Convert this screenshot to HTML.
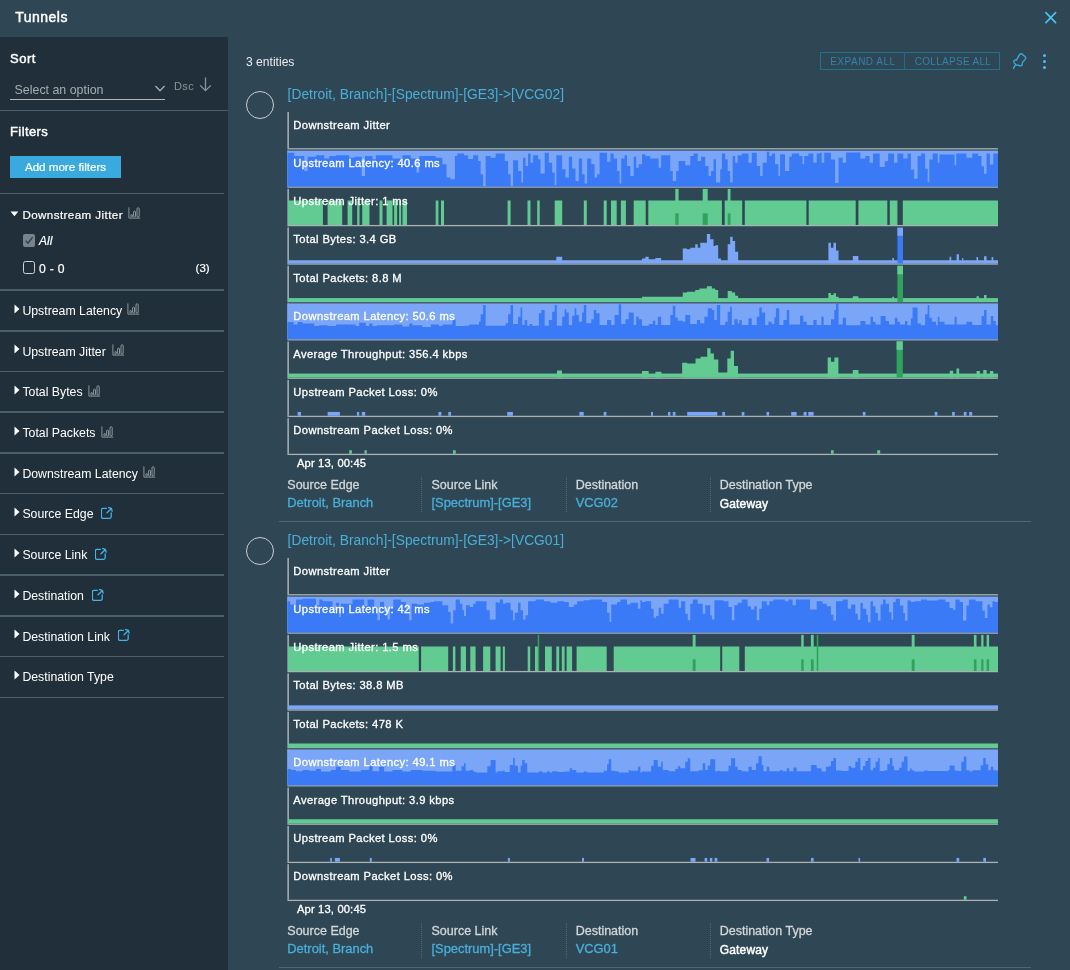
<!DOCTYPE html>
<html><head><meta charset="utf-8"><title>Tunnels</title>
<style>
html,body{margin:0;padding:0;}
body{width:1070px;height:970px;overflow:hidden;position:relative;background:#2f4654;font-family:"Liberation Sans", sans-serif;}
.t{position:absolute;line-height:1;white-space:nowrap;}
#wrap{position:absolute;left:0;top:0;width:1070px;height:970px;will-change:transform;}
.r{position:absolute;}
</style></head><body><div id="wrap">
<div class="r" style="left:0.00px;top:0.00px;width:1070.00px;height:37.00px;background:#2f4654;"></div>
<div class="t" style="left:15.20px;top:9.95px;font-size:14px;color:#fff;-webkit-text-stroke:0.45px #fff;letter-spacing:0.5px;">Tunnels</div>
<svg class="r" style="left:1043px;top:10px" width="16" height="16" viewBox="0 0 16 16"><path d="M2.9 2.6 L12.6 12.6 M12.6 2.6 L2.9 12.6" stroke="#49c2f2" stroke-width="1.7" stroke-linecap="round" fill="none"/></svg>
<div class="r" style="left:0.00px;top:37.00px;width:228.00px;height:933.00px;background:#202f39;"></div>
<div class="t" style="left:10.00px;top:52.00px;font-size:13px;color:#fff;-webkit-text-stroke:0.45px #fff;letter-spacing:0.5px;">Sort</div>
<div class="t" style="left:14.60px;top:84.10px;font-size:12.4px;color:#a7adb0;">Select an option</div>
<div class="r" style="left:10.00px;top:98.60px;width:154.60px;height:1.40px;background:#b4b8b8;"></div>
<svg class="r" style="left:154px;top:84px" width="12" height="9" viewBox="0 0 12 9"><path d="M1.5 2 L6 6.8 L10.5 2" stroke="#a9aaa5" stroke-width="1.4" fill="none"/></svg>
<div class="t" style="left:174.10px;top:81.49px;font-size:11px;color:#8a9599;letter-spacing:0.3px;">Dsc</div>
<svg class="r" style="left:199px;top:77px" width="13" height="15" viewBox="0 0 13 15"><path d="M6.5 0.6 L6.5 13.6 M1.2 8.4 L6.5 13.6 L11.8 8.4" stroke="#8a9599" stroke-width="1.3" fill="none"/></svg>
<div class="r" style="left:0.00px;top:109.60px;width:228.00px;height:1.60px;background:#4b5f6c;"></div>
<div class="t" style="left:10.00px;top:125.20px;font-size:13px;color:#fff;-webkit-text-stroke:0.45px #fff;letter-spacing:0.4px;">Filters</div>
<div class="r" style="left:10.00px;top:156.40px;width:111.00px;height:21.30px;background:#3aaade;"></div>
<div class="t" style="left:10.00px;top:161.48px;font-size:11.6px;color:#fff;-webkit-text-stroke:0.2px #fff;width:111px;text-align:center;">Add more filters</div>
<div class="r" style="left:0.00px;top:192.60px;width:224.00px;height:1.60px;background:#4b5f6c;"></div>
<svg class="r" style="left:10px;top:211px" width="9" height="6" viewBox="0 0 9 6"><path d="M0.5 0.5 H8.3 L4.4 5.3 Z" fill="#fff"/></svg>
<div class="t" style="left:22.40px;top:208.78px;font-size:11.6px;color:#fff;-webkit-text-stroke:0.2px #fff;letter-spacing:0.42px;">Downstream Jitter</div>
<svg class="r" style="left:128.0px;top:206.5px" width="13" height="12" viewBox="0 0 13 12"><g stroke="#98a2a7" stroke-width="0.9" fill="none"><path d="M0.9 0.4 V11.1 H12.2"/><rect x="2.9" y="7.6" width="1.4" height="2.4" rx="0.5"/><rect x="5.6" y="4.2" width="1.9" height="5.8" rx="0.8"/><rect x="9" y="0.8" width="2.2" height="9.2" rx="1"/></g></svg>
<div class="r" style="left:23.00px;top:234.00px;width:12.00px;height:12.50px;background:#77848b;border-radius:2px;"></div>
<svg class="r" style="left:23px;top:234px" width="12" height="13" viewBox="0 0 12 13"><path d="M2.6 6.6 L5 9.2 L9.6 3.2" stroke="#2d3a42" stroke-width="1.3" fill="none"/></svg>
<div class="t" style="left:39.00px;top:235.04px;font-size:12px;color:#fff;-webkit-text-stroke:0.2px #fff;font-style:italic;">All</div>
<div class="r" style="left:23.00px;top:261.40px;width:12.00px;height:12.60px;background:transparent;border:1.4px solid #cfd3d4;box-sizing:border-box;border-radius:2.5px;"></div>
<div class="t" style="left:39.00px;top:262.87px;font-size:12.2px;color:#fff;-webkit-text-stroke:0.2px #fff;letter-spacing:0.3px;">0 - 0</div>
<div class="t" style="left:195.60px;top:263.47px;font-size:11.5px;color:#fff;-webkit-text-stroke:0.2px #fff;">(3)</div>
<div class="r" style="left:0.00px;top:289.20px;width:224.00px;height:1.60px;background:#4b5f6c;"></div>
<svg class="r" style="left:14.2px;top:303.6px" width="6" height="10" viewBox="0 0 6 10"><path d="M0.5 0.4 V9.4 L5.5 4.9 Z" fill="#fff"/></svg>
<div class="t" style="left:22.40px;top:304.79px;font-size:12.3px;color:#fff;">Upstream Latency</div>
<svg class="r" style="left:127.0px;top:303.4px" width="13" height="12" viewBox="0 0 13 12"><g stroke="#98a2a7" stroke-width="0.9" fill="none"><path d="M0.9 0.4 V11.1 H12.2"/><rect x="2.9" y="7.6" width="1.4" height="2.4" rx="0.5"/><rect x="5.6" y="4.2" width="1.9" height="5.8" rx="0.8"/><rect x="9" y="0.8" width="2.2" height="9.2" rx="1"/></g></svg>
<div class="r" style="left:0.00px;top:329.93px;width:224.00px;height:1.60px;background:#4b5f6c;"></div>
<svg class="r" style="left:14.2px;top:344.3px" width="6" height="10" viewBox="0 0 6 10"><path d="M0.5 0.4 V9.4 L5.5 4.9 Z" fill="#fff"/></svg>
<div class="t" style="left:22.40px;top:345.52px;font-size:12.3px;color:#fff;">Upstream Jitter</div>
<svg class="r" style="left:112.0px;top:344.1px" width="13" height="12" viewBox="0 0 13 12"><g stroke="#98a2a7" stroke-width="0.9" fill="none"><path d="M0.9 0.4 V11.1 H12.2"/><rect x="2.9" y="7.6" width="1.4" height="2.4" rx="0.5"/><rect x="5.6" y="4.2" width="1.9" height="5.8" rx="0.8"/><rect x="9" y="0.8" width="2.2" height="9.2" rx="1"/></g></svg>
<div class="r" style="left:0.00px;top:370.66px;width:224.00px;height:1.60px;background:#4b5f6c;"></div>
<svg class="r" style="left:14.2px;top:385.1px" width="6" height="10" viewBox="0 0 6 10"><path d="M0.5 0.4 V9.4 L5.5 4.9 Z" fill="#fff"/></svg>
<div class="t" style="left:22.40px;top:386.25px;font-size:12.3px;color:#fff;">Total Bytes</div>
<svg class="r" style="left:87.5px;top:384.9px" width="13" height="12" viewBox="0 0 13 12"><g stroke="#98a2a7" stroke-width="0.9" fill="none"><path d="M0.9 0.4 V11.1 H12.2"/><rect x="2.9" y="7.6" width="1.4" height="2.4" rx="0.5"/><rect x="5.6" y="4.2" width="1.9" height="5.8" rx="0.8"/><rect x="9" y="0.8" width="2.2" height="9.2" rx="1"/></g></svg>
<div class="r" style="left:0.00px;top:411.39px;width:224.00px;height:1.60px;background:#4b5f6c;"></div>
<svg class="r" style="left:14.2px;top:425.8px" width="6" height="10" viewBox="0 0 6 10"><path d="M0.5 0.4 V9.4 L5.5 4.9 Z" fill="#fff"/></svg>
<div class="t" style="left:22.40px;top:426.98px;font-size:12.3px;color:#fff;">Total Packets</div>
<svg class="r" style="left:100.5px;top:425.6px" width="13" height="12" viewBox="0 0 13 12"><g stroke="#98a2a7" stroke-width="0.9" fill="none"><path d="M0.9 0.4 V11.1 H12.2"/><rect x="2.9" y="7.6" width="1.4" height="2.4" rx="0.5"/><rect x="5.6" y="4.2" width="1.9" height="5.8" rx="0.8"/><rect x="9" y="0.8" width="2.2" height="9.2" rx="1"/></g></svg>
<div class="r" style="left:0.00px;top:452.12px;width:224.00px;height:1.60px;background:#4b5f6c;"></div>
<svg class="r" style="left:14.2px;top:466.5px" width="6" height="10" viewBox="0 0 6 10"><path d="M0.5 0.4 V9.4 L5.5 4.9 Z" fill="#fff"/></svg>
<div class="t" style="left:22.40px;top:467.71px;font-size:12.3px;color:#fff;">Downstream Latency</div>
<svg class="r" style="left:143.0px;top:466.3px" width="13" height="12" viewBox="0 0 13 12"><g stroke="#98a2a7" stroke-width="0.9" fill="none"><path d="M0.9 0.4 V11.1 H12.2"/><rect x="2.9" y="7.6" width="1.4" height="2.4" rx="0.5"/><rect x="5.6" y="4.2" width="1.9" height="5.8" rx="0.8"/><rect x="9" y="0.8" width="2.2" height="9.2" rx="1"/></g></svg>
<div class="r" style="left:0.00px;top:492.85px;width:224.00px;height:1.60px;background:#4b5f6c;"></div>
<svg class="r" style="left:14.2px;top:507.2px" width="6" height="10" viewBox="0 0 6 10"><path d="M0.5 0.4 V9.4 L5.5 4.9 Z" fill="#fff"/></svg>
<div class="t" style="left:22.40px;top:508.44px;font-size:12.3px;color:#fff;">Source Edge</div>
<svg class="r" style="left:100.5px;top:507.0px" width="13" height="13" viewBox="0 0 13 13"><path d="M5.4 1.3 H1.9 Q0.4 1.3 0.4 2.8 V9.8 Q0.4 11.3 1.9 11.3 H8.7 Q10.2 11.3 10.2 9.8 V6 M6 5.7 L10.5 1.5 M7.5 0.7 Q10.7 0.5 11.1 4.1" stroke="#45b4e4" stroke-width="1.3" fill="none" stroke-linecap="round"/></svg>
<div class="r" style="left:0.00px;top:533.58px;width:224.00px;height:1.60px;background:#4b5f6c;"></div>
<svg class="r" style="left:14.2px;top:548.0px" width="6" height="10" viewBox="0 0 6 10"><path d="M0.5 0.4 V9.4 L5.5 4.9 Z" fill="#fff"/></svg>
<div class="t" style="left:22.40px;top:549.17px;font-size:12.3px;color:#fff;">Source Link</div>
<svg class="r" style="left:94.7px;top:547.8px" width="13" height="13" viewBox="0 0 13 13"><path d="M5.4 1.3 H1.9 Q0.4 1.3 0.4 2.8 V9.8 Q0.4 11.3 1.9 11.3 H8.7 Q10.2 11.3 10.2 9.8 V6 M6 5.7 L10.5 1.5 M7.5 0.7 Q10.7 0.5 11.1 4.1" stroke="#45b4e4" stroke-width="1.3" fill="none" stroke-linecap="round"/></svg>
<div class="r" style="left:0.00px;top:574.31px;width:224.00px;height:1.60px;background:#4b5f6c;"></div>
<svg class="r" style="left:14.2px;top:588.7px" width="6" height="10" viewBox="0 0 6 10"><path d="M0.5 0.4 V9.4 L5.5 4.9 Z" fill="#fff"/></svg>
<div class="t" style="left:22.40px;top:589.90px;font-size:12.3px;color:#fff;">Destination</div>
<svg class="r" style="left:92.1px;top:588.5px" width="13" height="13" viewBox="0 0 13 13"><path d="M5.4 1.3 H1.9 Q0.4 1.3 0.4 2.8 V9.8 Q0.4 11.3 1.9 11.3 H8.7 Q10.2 11.3 10.2 9.8 V6 M6 5.7 L10.5 1.5 M7.5 0.7 Q10.7 0.5 11.1 4.1" stroke="#45b4e4" stroke-width="1.3" fill="none" stroke-linecap="round"/></svg>
<div class="r" style="left:0.00px;top:615.04px;width:224.00px;height:1.60px;background:#4b5f6c;"></div>
<svg class="r" style="left:14.2px;top:629.4px" width="6" height="10" viewBox="0 0 6 10"><path d="M0.5 0.4 V9.4 L5.5 4.9 Z" fill="#fff"/></svg>
<div class="t" style="left:22.40px;top:630.63px;font-size:12.3px;color:#fff;">Destination Link</div>
<svg class="r" style="left:118.3px;top:629.2px" width="13" height="13" viewBox="0 0 13 13"><path d="M5.4 1.3 H1.9 Q0.4 1.3 0.4 2.8 V9.8 Q0.4 11.3 1.9 11.3 H8.7 Q10.2 11.3 10.2 9.8 V6 M6 5.7 L10.5 1.5 M7.5 0.7 Q10.7 0.5 11.1 4.1" stroke="#45b4e4" stroke-width="1.3" fill="none" stroke-linecap="round"/></svg>
<div class="r" style="left:0.00px;top:655.77px;width:224.00px;height:1.60px;background:#4b5f6c;"></div>
<svg class="r" style="left:14.2px;top:670.2px" width="6" height="10" viewBox="0 0 6 10"><path d="M0.5 0.4 V9.4 L5.5 4.9 Z" fill="#fff"/></svg>
<div class="t" style="left:22.40px;top:671.36px;font-size:12.3px;color:#fff;">Destination Type</div>
<div class="r" style="left:0.00px;top:696.50px;width:224.00px;height:1.60px;background:#4b5f6c;"></div>
<div class="t" style="left:246.00px;top:55.76px;font-size:12.1px;color:#e8ecee;">3 entities</div>
<div class="r" style="left:819.7px;top:52.2px;width:180.6px;height:18.3px;border:1.3px solid #23708f;box-sizing:border-box;"></div>
<div class="r" style="left:904.30px;top:52.20px;width:1.00px;height:18.30px;background:#1f6d8c;"></div>
<div class="t" style="left:830.20px;top:56.73px;font-size:10px;color:#2f85ab;letter-spacing:0.5px;">EXPAND ALL</div>
<div class="t" style="left:914.70px;top:56.73px;font-size:10px;color:#2f85ab;letter-spacing:0.3px;">COLLAPSE ALL</div>
<svg class="r" style="left:1005px;top:48px" width="26" height="24" viewBox="1005 48 26 24"><path d="M1019.6 54.6 Q1020.6 53.2 1021.8 53.9 L1025.2 56.8 Q1026.2 57.8 1025.4 58.9 L1022.2 62.9 Q1022.9 64.6 1021.4 65.6 Q1019.8 66.2 1018.6 65.2 L1016.2 65 L1014 62.6 Q1013.4 61.2 1014.2 60.4 Q1015.3 59.8 1016.4 60.2 Z M1015.6 64.6 L1013.4 68.4" stroke="#3aa6d6" stroke-width="1.4" fill="none" stroke-linejoin="round" stroke-linecap="round"/></svg>
<div class="r" style="left:1043.05px;top:53.85px;width:3.30px;height:3.30px;background:#49c0ef;border-radius:50%;"></div>
<div class="r" style="left:1043.05px;top:59.90px;width:3.30px;height:3.30px;background:#49c0ef;border-radius:50%;"></div>
<div class="r" style="left:1043.05px;top:65.85px;width:3.30px;height:3.30px;background:#49c0ef;border-radius:50%;"></div>
<div class="r" style="left:246px;top:90.5px;width:28px;height:28px;border:1.5px solid #c9ced1;border-radius:50%;box-sizing:border-box;"></div>
<div class="t" style="left:287.60px;top:87.92px;font-size:13.8px;color:#49afd9;">[Detroit, Branch]-[Spectrum]-[GE3]-&gt;[VCG02]</div>
<svg class="r" style="left:0;top:0" width="1070" height="970" viewBox="0 0 1070 970"><rect x="287.4" y="112.00" width="1.5" height="36.15" fill="#aab1b4"/><rect x="287.4" y="148.15" width="710.6" height="1.3" fill="#aab1b4"/><rect x="287.4" y="150.60" width="1.5" height="35.85" fill="#aab1b4"/><rect x="287.4" y="186.45" width="710.6" height="1.3" fill="#aab1b4"/><rect x="287.4" y="188.90" width="1.5" height="36.05" fill="#aab1b4"/><rect x="287.4" y="224.95" width="710.6" height="1.3" fill="#aab1b4"/><rect x="287.4" y="227.40" width="1.5" height="35.95" fill="#aab1b4"/><rect x="287.4" y="263.35" width="710.6" height="1.3" fill="#aab1b4"/><rect x="287.4" y="265.80" width="1.5" height="35.15" fill="#aab1b4"/><rect x="287.4" y="300.95" width="710.6" height="1.3" fill="#aab1b4"/><rect x="287.4" y="303.40" width="1.5" height="35.75" fill="#aab1b4"/><rect x="287.4" y="339.15" width="710.6" height="1.3" fill="#aab1b4"/><rect x="287.4" y="341.60" width="1.5" height="35.95" fill="#aab1b4"/><rect x="287.4" y="377.55" width="710.6" height="1.3" fill="#aab1b4"/><rect x="287.4" y="380.00" width="1.5" height="35.75" fill="#aab1b4"/><rect x="287.4" y="415.75" width="710.6" height="1.3" fill="#aab1b4"/><rect x="287.4" y="418.20" width="1.5" height="35.55" fill="#aab1b4"/><rect x="287.4" y="453.75" width="710.6" height="1.3" fill="#aab1b4"/><rect x="287.4" y="150.60" width="710.6" height="35.85" fill="#7ba6f7"/><path d="M287.4 186.45 L287.4 152.65 L287.40 152.65 L294.32 152.65 L294.32 155.98 L304.30 155.98 L304.30 170.95 L307.63 170.95 L307.63 156.81 L315.95 156.81 L315.95 155.15 L324.26 155.15 L324.26 158.48 L329.25 158.48 L329.25 155.98 L335.91 155.98 L335.91 155.15 L349.22 155.15 L349.22 157.65 L354.21 157.65 L354.21 156.81 L361.69 156.81 L361.69 175.95 L365.02 175.95 L365.02 155.98 L372.51 155.98 L372.51 159.31 L375.84 159.31 L375.84 155.15 L392.47 155.15 L392.47 158.48 L402.45 158.48 L402.45 155.15 L410.77 155.15 L410.77 158.48 L416.59 158.48 L416.59 172.62 L419.09 172.62 L419.09 155.98 L424.08 155.98 L424.08 155.98 L435.73 155.98 L435.73 157.65 L442.38 157.65 L442.38 164.30 L446.54 164.30 L446.54 177.61 L450.70 177.61 L450.70 179.27 L454.86 179.27 L454.86 155.98 L457.35 155.98 L457.35 153.49 L464.01 153.49 L464.00 155.15 L468.16 155.15 L468.16 158.98 L473.15 158.98 L473.15 155.15 L478.14 155.15 L478.14 160.97 L480.64 160.97 L480.64 174.28 L483.13 174.28 L483.13 185.93 L485.63 185.93 L485.63 155.98 L490.62 155.98 L490.62 157.65 L495.61 157.65 L495.61 153.49 L504.76 153.49 L504.76 160.97 L508.09 160.97 L508.09 174.28 L510.58 174.28 L510.58 185.93 L513.08 185.93 L513.08 160.14 L518.07 160.14 L518.07 170.95 L521.39 170.95 L521.39 182.60 L523.06 182.60 L523.06 157.65 L525.55 157.65 L525.55 165.96 L528.05 165.96 L528.05 153.49 L530.54 153.49 L530.54 162.64 L533.04 162.64 L533.04 155.15 L538.03 155.15 L538.03 159.31 L540.53 159.31 L540.53 173.45 L544.69 173.45 L544.69 152.65 L548.84 152.65 L548.84 162.64 L552.17 162.64 L552.17 172.62 L554.67 172.62 L554.67 185.09 L556.33 185.09 L556.33 155.15 L562.15 155.15 L562.15 169.29 L565.48 169.29 L565.48 177.61 L568.81 177.61 L568.81 156.81 L572.14 156.81 L572.14 168.46 L575.46 168.46 L575.46 180.94 L578.79 180.94 L578.79 158.48 L582.12 158.48 L582.12 174.28 L584.61 174.28 L584.61 183.43 L587.11 183.43 L587.11 158.48 L591.27 158.48 L591.27 164.30 L594.59 164.30 L594.59 177.61 L597.09 177.61 L597.09 174.28 L599.58 174.28 L599.58 152.65 L607.07 152.65 L607.07 161.80 L610.40 161.80 L610.40 153.49 L613.73 153.49 L613.73 158.48 L617.05 158.48 L617.05 170.95 L619.55 170.95 L619.55 183.43 L621.21 183.43 L621.21 158.48 L624.54 158.48 L624.54 155.15 L627.03 155.15 L627.03 165.96 L630.36 165.96 L630.36 175.95 L633.69 175.95 L633.69 156.81 L636.18 156.81 L636.18 167.63 L638.68 167.63 L638.68 164.30 L642.01 164.30 L642.00 154.32 L645.33 154.32 L645.33 155.98 L650.32 155.98 L650.32 158.48 L658.64 158.48 L658.64 167.63 L661.13 167.63 L661.13 155.15 L670.28 155.15 L670.28 170.95 L672.78 170.95 L672.78 180.94 L676.10 180.94 L676.10 170.95 L678.60 170.95 L678.60 160.97 L685.25 160.97 L685.25 165.13 L690.24 165.13 L690.24 155.98 L693.57 155.98 L693.57 153.49 L697.73 153.49 L697.73 160.97 L701.06 160.97 L701.06 156.81 L705.22 156.81 L705.22 165.96 L708.54 165.96 L708.54 175.95 L711.04 175.95 L711.04 170.95 L713.54 170.95 L713.54 159.31 L716.03 159.31 L716.03 182.60 L720.19 182.60 L720.19 169.29 L721.85 169.29 L721.85 153.49 L725.18 153.49 L725.18 159.31 L727.68 159.31 L727.68 170.95 L730.17 170.95 L730.17 182.60 L732.67 182.60 L732.67 155.98 L735.16 155.98 L735.16 162.64 L737.66 162.64 L737.66 155.15 L741.82 155.15 L741.82 153.49 L748.47 153.49 L748.47 162.64 L751.80 162.64 L751.80 152.65 L756.79 152.65 L756.79 165.96 L760.12 165.96 L760.12 175.95 L762.61 175.95 L762.61 162.64 L766.77 162.64 L766.77 151.82 L769.27 151.82 L769.27 155.98 L771.76 155.98 L771.76 153.49 L775.09 153.49 L775.09 164.30 L778.42 164.30 L778.42 175.95 L780.08 175.95 L780.08 154.32 L785.07 154.32 L785.07 170.95 L789.23 170.95 L789.23 156.81 L791.73 156.81 L791.73 153.49 L799.21 153.49 L799.21 155.98 L802.54 155.98 L802.54 164.30 L804.20 164.30 L804.20 155.98 L808.36 155.98 L808.36 153.49 L813.35 153.49 L813.35 162.64 L816.68 162.64 L816.68 153.49 L820.01 153.49 L820.00 152.73 L821.68 152.73 L821.68 162.82 L824.21 162.82 L824.21 152.73 L830.94 152.73 L830.94 159.46 L835.14 159.46 L835.14 183.01 L838.51 183.01 L838.51 157.78 L842.71 157.78 L842.71 162.82 L846.08 162.82 L846.08 152.39 L860.38 152.39 L860.38 158.62 L865.42 158.62 L865.42 156.09 L869.63 156.09 L869.63 162.82 L872.99 162.82 L872.99 153.57 L879.72 153.57 L879.72 167.03 L884.77 167.03 L884.77 161.14 L888.14 161.14 L888.14 153.57 L894.02 153.57 L894.02 162.82 L897.39 162.82 L897.39 153.57 L903.28 153.57 L903.28 158.62 L907.48 158.62 L907.48 153.57 L910.85 153.57 L910.85 169.55 L914.21 169.55 L914.21 178.81 L917.58 178.81 L917.58 156.09 L920.94 156.09 L920.94 153.57 L925.15 153.57 L925.15 168.71 L927.67 168.71 L927.67 182.17 L929.35 182.17 L929.35 159.46 L932.72 159.46 L932.72 153.57 L937.77 153.57 L937.77 162.82 L939.45 162.82 L939.45 154.41 L954.59 154.41 L954.59 165.35 L956.27 165.35 L956.27 153.57 L966.37 153.57 L966.37 157.78 L972.25 157.78 L972.25 153.57 L978.14 153.57 L978.14 156.09 L981.51 156.09 L981.51 166.19 L984.03 166.19 L984.03 173.76 L986.55 173.76 L986.55 153.57 L989.92 153.57 L989.92 164.51 L993.28 164.51 L993.28 153.57 L998.00 153.57 L998 186.45 Z" fill="#3b7af7"/><path d="M288.00 200.50H322.90V224.95H288.00ZM327.60 200.50H342.20V224.95H327.60ZM347.60 200.50H352.20V224.95H347.60ZM357.20 200.50H359.50V224.95H357.20ZM362.20 200.50H369.50V224.95H362.20ZM379.50 200.50H382.50V224.95H379.50ZM386.60 200.50H392.50V224.95H386.60ZM394.10 200.50H397.10V224.95H394.10ZM399.10 200.50H401.10V224.95H399.10ZM402.50 200.50H407.00V224.95H402.50ZM435.70 200.50H438.40V224.95H435.70ZM441.00 200.50H444.00V224.95H441.00ZM507.60 200.50H510.60V224.95H507.60ZM527.50 200.50H530.50V224.95H527.50ZM537.20 200.50H539.70V224.95H537.20ZM554.70 200.50H562.20V224.95H554.70ZM583.80 200.50H586.80V224.95H583.80ZM603.70 200.50H606.70V224.95H603.70ZM611.00 200.50H616.70V224.95H611.00ZM620.90 200.50H625.90V224.95H620.90ZM633.70 200.50H645.70V224.95H633.70ZM648.30 200.50H721.90V224.95H648.30ZM724.70 200.50H742.20V224.95H724.70ZM744.80 200.50H806.40V224.95H744.80ZM808.70 200.50H855.70V224.95H808.70ZM858.40 200.50H887.30V224.95H858.40ZM889.80 200.50H897.40V224.95H889.80ZM902.80 200.50H998.00V224.95H902.80Z" fill="#62cb92"/><rect x="675.30" y="188.90" width="3.30" height="36.05" fill="#62cb92"/><rect x="675.30" y="213.35" width="3.30" height="11.6" fill="#2fa35c"/><rect x="702.70" y="188.90" width="5.00" height="36.05" fill="#62cb92"/><rect x="702.70" y="213.35" width="5.00" height="11.6" fill="#2fa35c"/><rect x="727.70" y="188.90" width="2.80" height="36.05" fill="#62cb92"/><rect x="727.70" y="213.35" width="2.80" height="11.6" fill="#2fa35c"/><rect x="288" y="260.25" width="710" height="3.10" fill="#7ba6f7"/><path d="M642.00 258.44H645.33V263.35H642.00ZM645.33 256.78H648.65V263.35H645.33ZM648.65 259.27H655.31V263.35H648.65ZM655.31 258.11H661.13V263.35H655.31ZM682.76 248.46H686.92V263.35H682.76ZM686.92 249.29H690.24V263.35H686.92ZM690.24 247.63H695.24V263.35H690.24ZM695.24 244.30H697.73V263.35H695.24ZM697.73 247.63H700.23V263.35H697.73ZM700.23 242.64H706.88V263.35H700.23ZM706.88 233.99H710.21V263.35H706.88ZM710.21 239.31H713.54V263.35H710.21ZM713.54 245.96H715.20V263.35H713.54ZM715.20 245.13H718.19V263.35H715.20ZM718.19 258.44H721.02V263.35H718.19ZM727.68 244.30H730.17V263.35H727.68ZM730.17 236.81H732.67V263.35H730.17ZM732.67 240.97H735.16V263.35H732.67ZM735.16 251.79H738.16V263.35H735.16ZM828.41 242.82H830.94V263.35H828.41ZM830.94 247.87H833.46V263.35H830.94ZM833.46 242.82H835.98V263.35H833.46ZM835.98 250.39H838.51V263.35H835.98ZM852.81 255.95H858.36V263.35H852.81ZM892.34 257.97H894.02V263.35H892.34ZM949.54 256.79H951.22V263.35H949.54ZM956.61 254.26H958.96V263.35H956.61ZM962.16 257.97H963.34V263.35H962.16ZM976.46 257.12H978.14V263.35H976.46ZM984.03 256.28H986.55V263.35H984.03ZM991.60 257.12H993.28V263.35H991.60ZM556.30 256.80H562.20V263.35H556.30Z" fill="#7ba6f7"/><rect x="897.4" y="227.70" width="5.6" height="35.65" fill="#3b7af7"/><rect x="897.4" y="227.70" width="5.6" height="8" fill="#7ba6f7"/><rect x="288" y="298.10" width="710" height="3.80" fill="#62cb92"/><path d="M642.00 296.70H682.76V301.90H642.00ZM682.76 292.54H686.92V301.90H682.76ZM686.92 291.71H695.24V301.90H686.92ZM695.24 290.05H699.39V301.90H695.24ZM699.39 288.39H706.88V301.90H699.39ZM706.88 286.22H711.87V301.90H706.88ZM711.87 288.39H715.20V301.90H711.87ZM715.20 290.05H718.19V301.90H715.20ZM727.68 290.88H731.84V301.90H727.68ZM731.84 292.54H735.16V301.90H731.84ZM735.16 295.87H738.16V301.90H735.16ZM828.41 292.96H830.94V301.90H828.41ZM830.94 294.98H833.46V301.90H830.94ZM833.46 293.29H835.98V301.90H833.46ZM835.98 296.66H838.51V301.90H835.98ZM852.81 296.32H858.36V301.90H852.81ZM892.34 296.66H894.02V301.90H892.34ZM976.46 296.32H978.98V301.90H976.46ZM984.03 294.98H986.55V301.90H984.03Z" fill="#62cb92"/><rect x="897.4" y="265.80" width="5.6" height="36.10" fill="#2fa35c"/><rect x="897.4" y="265.80" width="5.6" height="8.5" fill="#62cb92"/><rect x="287.4" y="303.40" width="710.6" height="35.75" fill="#7ba6f7"/><path d="M287.4 339.15 L287.4 321.96 L287.40 321.96 L293.49 321.96 L293.49 324.46 L297.65 324.46 L297.65 321.96 L302.64 321.96 L302.64 323.62 L314.28 323.62 L314.28 326.12 L319.27 326.12 L319.27 325.29 L327.59 325.29 L327.59 326.12 L335.91 326.12 L335.91 324.46 L344.23 324.46 L344.23 324.46 L355.87 324.46 L355.87 326.12 L359.20 326.12 L359.20 322.79 L365.85 322.79 L365.85 326.12 L369.18 326.12 L369.18 323.62 L372.51 323.62 L372.51 326.12 L376.67 326.12 L376.67 325.29 L394.14 325.29 L394.14 324.46 L402.45 324.46 L402.45 326.62 L409.11 326.62 L409.11 323.62 L412.43 323.62 L412.43 325.29 L422.42 325.29 L422.42 326.95 L430.73 326.95 L430.73 324.46 L439.05 324.46 L439.05 326.12 L442.38 326.12 L442.38 324.46 L452.36 324.46 L452.36 319.46 L455.69 319.46 L455.69 326.12 L464.01 326.12 L464.00 325.79 L468.99 325.79 L468.99 324.62 L478.97 324.62 L478.97 321.63 L480.64 321.63 L480.64 314.14 L483.13 314.14 L483.13 304.99 L485.63 304.99 L485.63 325.79 L505.59 325.79 L505.59 323.29 L508.09 323.29 L508.09 314.14 L510.58 314.14 L510.58 304.99 L513.08 304.99 L513.08 324.12 L518.07 324.12 L518.07 316.64 L520.56 316.64 L520.56 307.49 L522.23 307.49 L522.23 324.95 L524.72 324.95 L524.72 319.96 L527.22 319.96 L527.22 325.79 L529.71 325.79 L529.71 324.12 L532.21 324.12 L532.21 325.79 L538.86 325.79 L538.86 313.31 L541.36 313.31 L541.36 309.98 L544.69 309.98 L544.69 325.79 L548.84 325.79 L548.84 319.96 L552.17 319.96 L552.17 311.65 L554.67 311.65 L554.67 304.99 L556.83 304.99 L556.83 325.79 L562.15 325.79 L562.15 316.64 L564.65 316.64 L564.65 309.15 L566.31 309.15 L566.31 312.48 L568.81 312.48 L568.81 324.95 L572.14 324.95 L572.14 315.80 L574.63 315.80 L574.63 308.32 L576.29 308.32 L576.29 314.97 L578.79 314.97 L578.79 321.63 L582.12 321.63 L582.12 312.48 L583.78 312.48 L583.78 304.99 L586.28 304.99 L586.28 323.29 L591.27 323.29 L591.27 319.13 L593.76 319.13 L593.76 309.98 L596.26 309.98 L596.26 313.31 L599.58 313.31 L599.58 324.95 L607.07 324.95 L607.07 319.96 L611.23 319.96 L611.23 324.95 L614.56 324.95 L614.56 314.97 L618.72 314.97 L618.72 304.16 L621.21 304.16 L621.21 324.12 L625.37 324.12 L625.37 319.13 L628.70 319.13 L628.70 312.48 L633.69 312.48 L633.69 324.95 L636.18 324.95 L636.18 316.64 L638.68 316.64 L638.68 319.13 L642.01 319.13 L642.00 325.79 L648.65 325.79 L648.65 324.12 L652.81 324.12 L652.81 320.80 L655.31 320.80 L655.31 324.95 L657.80 324.95 L657.80 316.64 L661.13 316.64 L661.13 324.95 L670.28 324.95 L670.28 314.97 L672.78 314.97 L672.78 305.82 L675.27 305.82 L675.27 317.47 L677.77 317.47 L677.77 320.80 L682.76 320.80 L682.76 321.63 L685.25 321.63 L685.25 314.97 L690.24 314.97 L690.24 324.12 L696.90 324.12 L696.90 319.96 L700.23 319.96 L700.23 323.29 L704.39 323.29 L704.39 316.64 L707.71 316.64 L707.71 308.32 L711.87 308.32 L711.87 309.98 L714.37 309.98 L714.37 319.96 L716.86 319.96 L716.86 304.99 L720.19 304.99 L720.19 324.95 L725.18 324.95 L725.18 321.63 L727.68 321.63 L727.68 311.65 L730.17 311.65 L730.17 306.65 L731.84 306.65 L731.84 324.95 L734.33 324.95 L734.33 319.13 L737.66 319.13 L737.66 323.29 L739.32 323.29 L739.32 319.96 L741.82 319.96 L741.82 324.95 L748.47 324.95 L748.47 318.30 L751.80 318.30 L751.80 324.95 L756.79 324.95 L756.79 316.64 L759.28 316.64 L759.28 307.49 L761.78 307.49 L761.78 312.48 L765.11 312.48 L765.11 324.95 L768.43 324.95 L768.43 321.63 L771.76 321.63 L771.76 324.12 L774.26 324.12 L774.26 317.47 L775.92 317.47 L775.92 308.32 L779.25 308.32 L779.25 324.95 L783.41 324.95 L783.41 319.96 L786.73 319.96 L786.73 309.98 L789.23 309.98 L789.23 324.62 L800.04 324.62 L800.04 315.80 L803.37 315.80 L803.37 321.63 L806.70 321.63 L806.70 324.95 L813.35 324.95 L813.35 319.96 L816.68 319.96 L816.68 324.95 L820.01 324.95 L820.00 325.24 L821.35 325.24 L821.35 316.82 L823.70 316.82 L823.70 324.90 L830.94 324.90 L830.94 319.35 L834.30 319.35 L834.30 310.09 L835.98 310.09 L835.98 303.40 L838.51 303.40 L838.51 324.39 L842.71 324.39 L842.71 317.66 L846.08 317.66 L846.08 325.24 L860.38 325.24 L860.38 321.03 L865.42 321.03 L865.42 324.39 L870.47 324.39 L870.47 316.82 L872.99 316.82 L872.99 321.87 L875.52 321.87 L875.52 324.39 L880.57 324.39 L880.57 315.98 L885.61 315.98 L885.61 321.03 L888.98 321.03 L888.98 324.39 L894.87 324.39 L894.87 317.66 L897.39 317.66 L897.39 321.87 L899.91 321.87 L899.91 324.39 L904.96 324.39 L904.96 321.03 L907.48 321.03 L907.48 325.24 L910.85 325.24 L910.85 318.51 L912.53 318.51 L912.53 307.57 L917.58 307.57 L917.58 323.55 L920.94 323.55 L920.94 325.24 L925.15 325.24 L925.15 314.30 L927.67 314.30 L927.67 305.05 L929.35 305.05 L929.35 317.66 L931.88 317.66 L931.88 321.87 L936.08 321.87 L936.08 325.24 L937.77 325.24 L937.77 316.82 L939.45 316.82 L939.45 321.87 L944.50 321.87 L944.50 324.39 L954.59 324.39 L954.59 316.82 L956.61 316.82 L956.61 324.39 L966.37 324.39 L966.37 321.87 L972.25 321.87 L972.25 324.90 L981.51 324.90 L981.51 315.98 L984.03 315.98 L984.03 310.09 L986.55 310.09 L986.55 324.39 L990.76 324.39 L990.76 315.98 L993.28 315.98 L993.28 321.03 L995.81 321.03 L995.81 325.24 L998.00 325.24 L998 339.15 Z" fill="#3b7af7"/><rect x="288" y="373.55" width="710" height="4.00" fill="#62cb92"/><path d="M642.00 371.11H648.69V377.55H642.00ZM655.38 371.78H661.40V377.55H655.38ZM682.15 362.75H687.17V377.55H682.15ZM687.17 363.42H695.53V377.55H687.17ZM695.53 358.40H700.55V377.55H695.53ZM700.55 356.73H707.24V377.55H700.55ZM707.24 348.36H710.58V377.55H707.24ZM710.58 353.38H713.93V377.55H710.58ZM713.93 359.40H718.28V377.55H713.93ZM718.28 372.45H727.31V377.55H718.28ZM727.31 358.40H730.66V377.55H727.31ZM730.66 350.71H734.00V377.55H730.66ZM734.00 366.10H738.02V377.55H734.00ZM827.68 357.40H831.03V377.55H827.68ZM831.03 361.75H834.37V377.55H831.03ZM834.37 357.40H838.39V377.55H834.37ZM852.77 370.11H858.46V377.55H852.77ZM949.80 370.78H953.14V377.55H949.80ZM956.49 368.44H959.16V377.55H956.49ZM976.56 371.11H979.91V377.55H976.56ZM983.25 370.11H986.60V377.55H983.25ZM989.94 371.11H993.29V377.55H989.94ZM557.00 370.60H562.00V377.55H557.00Z" fill="#62cb92"/><rect x="896.6" y="341.30" width="6.2" height="36.25" fill="#2fa35c"/><rect x="896.6" y="341.30" width="6.2" height="8.5" fill="#62cb92"/><rect x="297.60" y="411.95" width="3.40" height="3.8" fill="#7ba6f7"/><rect x="327.60" y="411.95" width="12.30" height="3.8" fill="#7ba6f7"/><rect x="356.90" y="411.95" width="2.30" height="3.8" fill="#7ba6f7"/><rect x="361.80" y="411.95" width="3.40" height="3.8" fill="#7ba6f7"/><rect x="438.40" y="411.95" width="3.00" height="3.8" fill="#7ba6f7"/><rect x="448.30" y="411.95" width="2.70" height="3.8" fill="#7ba6f7"/><rect x="507.20" y="411.95" width="5.70" height="3.8" fill="#7ba6f7"/><rect x="579.40" y="411.95" width="4.30" height="3.8" fill="#7ba6f7"/><rect x="603.70" y="411.95" width="2.70" height="3.8" fill="#7ba6f7"/><rect x="651.00" y="411.95" width="2.00" height="3.8" fill="#7ba6f7"/><rect x="668.00" y="411.95" width="2.40" height="3.8" fill="#7ba6f7"/><rect x="672.80" y="411.95" width="2.70" height="3.8" fill="#7ba6f7"/><rect x="687.20" y="411.95" width="30.10" height="3.8" fill="#7ba6f7"/><rect x="722.30" y="411.95" width="2.70" height="3.8" fill="#7ba6f7"/><rect x="741.70" y="411.95" width="2.70" height="3.8" fill="#7ba6f7"/><rect x="766.50" y="411.95" width="2.60" height="3.8" fill="#7ba6f7"/><rect x="791.20" y="411.95" width="5.40" height="3.8" fill="#7ba6f7"/><rect x="803.60" y="411.95" width="3.00" height="3.8" fill="#7ba6f7"/><rect x="808.30" y="411.95" width="5.30" height="3.8" fill="#7ba6f7"/><rect x="862.80" y="411.95" width="2.70" height="3.8" fill="#7ba6f7"/><rect x="934.70" y="411.95" width="2.70" height="3.8" fill="#7ba6f7"/><rect x="952.10" y="411.95" width="2.70" height="3.8" fill="#7ba6f7"/><rect x="963.80" y="411.95" width="2.70" height="3.8" fill="#7ba6f7"/><rect x="969.20" y="411.95" width="3.00" height="3.8" fill="#7ba6f7"/><rect x="349.20" y="450.25" width="2.70" height="3.5" fill="#62cb92"/><rect x="364.50" y="450.25" width="2.30" height="3.5" fill="#62cb92"/><rect x="453.00" y="450.25" width="2.70" height="3.5" fill="#62cb92"/><rect x="831.00" y="450.25" width="2.70" height="3.5" fill="#62cb92"/><rect x="877.20" y="450.25" width="3.00" height="3.5" fill="#62cb92"/></svg>
<div class="t" style="left:293.30px;top:120.12px;font-size:11.2px;color:#fff;-webkit-text-stroke:0.3px #fff;letter-spacing:0.4px;">Downstream Jitter</div>
<div class="t" style="left:293.30px;top:158.22px;font-size:11.2px;color:#fff;-webkit-text-stroke:0.3px #fff;letter-spacing:0.4px;">Upstream Latency: 40.6 ms</div>
<div class="t" style="left:293.30px;top:196.32px;font-size:11.2px;color:#fff;-webkit-text-stroke:0.3px #fff;letter-spacing:0.4px;">Upstream Jitter: 1 ms</div>
<div class="t" style="left:293.30px;top:234.42px;font-size:11.2px;color:#fff;-webkit-text-stroke:0.3px #fff;letter-spacing:0.4px;">Total Bytes: 3.4 GB</div>
<div class="t" style="left:293.30px;top:272.52px;font-size:11.2px;color:#fff;-webkit-text-stroke:0.3px #fff;letter-spacing:0.4px;">Total Packets: 8.8 M</div>
<div class="t" style="left:293.30px;top:310.62px;font-size:11.2px;color:#fff;-webkit-text-stroke:0.3px #fff;letter-spacing:0.4px;">Downstream Latency: 50.6 ms</div>
<div class="t" style="left:293.30px;top:348.72px;font-size:11.2px;color:#fff;-webkit-text-stroke:0.3px #fff;letter-spacing:0.4px;">Average Throughput: 356.4 kbps</div>
<div class="t" style="left:293.30px;top:386.82px;font-size:11.2px;color:#fff;-webkit-text-stroke:0.3px #fff;letter-spacing:0.4px;">Upstream Packet Loss: 0%</div>
<div class="t" style="left:293.30px;top:424.92px;font-size:11.2px;color:#fff;-webkit-text-stroke:0.3px #fff;letter-spacing:0.4px;">Downstream Packet Loss: 0%</div>
<div class="t" style="left:297.00px;top:458.42px;font-size:11.2px;color:#fff;-webkit-text-stroke:0.3px #fff;letter-spacing:0.15px;">Apr 13, 00:45</div>
<div class="t" style="left:287.30px;top:478.82px;font-size:12.5px;color:#d3d7d9;-webkit-text-stroke:0.3px #d3d7d9;">Source Edge</div>
<div class="t" style="left:287.30px;top:497.08px;font-size:12.9px;color:#49afd9;-webkit-text-stroke:0.3px #49afd9;">Detroit, Branch</div>
<div class="t" style="left:431.50px;top:478.82px;font-size:12.5px;color:#d3d7d9;-webkit-text-stroke:0.3px #d3d7d9;">Source Link</div>
<div class="t" style="left:431.50px;top:497.08px;font-size:12.9px;color:#49afd9;-webkit-text-stroke:0.3px #49afd9;">[Spectrum]-[GE3]</div>
<div class="t" style="left:575.70px;top:478.82px;font-size:12.5px;color:#d3d7d9;-webkit-text-stroke:0.3px #d3d7d9;">Destination</div>
<div class="t" style="left:575.70px;top:497.08px;font-size:12.9px;color:#49afd9;-webkit-text-stroke:0.3px #49afd9;">VCG02</div>
<div class="t" style="left:719.70px;top:478.82px;font-size:12.5px;color:#d3d7d9;-webkit-text-stroke:0.3px #d3d7d9;">Destination Type</div>
<div class="t" style="left:719.70px;top:497.84px;font-size:12px;color:#fff;-webkit-text-stroke:0.45px #fff;letter-spacing:0.17px;">Gateway</div>
<div class="r" style="left:421.1px;top:476.5px;width:1px;height:36px;background:repeating-linear-gradient(to bottom,#7a8890 0 1px,transparent 1px 2px);opacity:0.5;"></div>
<div class="r" style="left:565.5px;top:476.5px;width:1px;height:36px;background:repeating-linear-gradient(to bottom,#7a8890 0 1px,transparent 1px 2px);opacity:0.5;"></div>
<div class="r" style="left:709.5px;top:476.5px;width:1px;height:36px;background:repeating-linear-gradient(to bottom,#7a8890 0 1px,transparent 1px 2px);opacity:0.5;"></div>
<div class="r" style="left:279.00px;top:520.70px;width:752.00px;height:1.30px;background:#55656f;"></div>
<div class="r" style="left:246px;top:536.5px;width:28px;height:28px;border:1.5px solid #c9ced1;border-radius:50%;box-sizing:border-box;"></div>
<div class="t" style="left:287.60px;top:533.92px;font-size:13.8px;color:#49afd9;">[Detroit, Branch]-[Spectrum]-[GE3]-&gt;[VCG01]</div>
<svg class="r" style="left:0;top:0" width="1070" height="970" viewBox="0 0 1070 970"><rect x="287.4" y="558.00" width="1.5" height="36.15" fill="#aab1b4"/><rect x="287.4" y="594.15" width="710.6" height="1.3" fill="#aab1b4"/><rect x="287.4" y="596.60" width="1.5" height="35.85" fill="#aab1b4"/><rect x="287.4" y="632.45" width="710.6" height="1.3" fill="#aab1b4"/><rect x="287.4" y="634.90" width="1.5" height="36.05" fill="#aab1b4"/><rect x="287.4" y="670.95" width="710.6" height="1.3" fill="#aab1b4"/><rect x="287.4" y="673.40" width="1.5" height="35.95" fill="#aab1b4"/><rect x="287.4" y="709.35" width="710.6" height="1.3" fill="#aab1b4"/><rect x="287.4" y="711.80" width="1.5" height="35.15" fill="#aab1b4"/><rect x="287.4" y="746.95" width="710.6" height="1.3" fill="#aab1b4"/><rect x="287.4" y="749.40" width="1.5" height="35.75" fill="#aab1b4"/><rect x="287.4" y="785.15" width="710.6" height="1.3" fill="#aab1b4"/><rect x="287.4" y="787.60" width="1.5" height="35.95" fill="#aab1b4"/><rect x="287.4" y="823.55" width="710.6" height="1.3" fill="#aab1b4"/><rect x="287.4" y="826.00" width="1.5" height="35.75" fill="#aab1b4"/><rect x="287.4" y="861.75" width="710.6" height="1.3" fill="#aab1b4"/><rect x="287.4" y="864.20" width="1.5" height="35.55" fill="#aab1b4"/><rect x="287.4" y="899.75" width="710.6" height="1.3" fill="#aab1b4"/><rect x="287.4" y="596.60" width="710.6" height="35.85" fill="#7ba6f7"/><path d="M287.4 632.45 L287.4 601.15 L287.40 601.15 L290.16 601.15 L290.16 604.48 L295.98 604.48 L295.98 599.49 L302.64 599.49 L302.64 598.65 L315.95 598.65 L315.95 605.31 L319.27 605.31 L319.27 599.49 L322.60 599.49 L322.60 601.15 L332.58 601.15 L332.58 610.30 L335.91 610.30 L335.91 602.81 L339.24 602.81 L339.24 616.95 L340.90 616.95 L340.90 603.65 L352.54 603.65 L352.54 599.49 L364.19 599.49 L364.19 606.14 L367.52 606.14 L367.52 599.49 L374.17 599.49 L374.17 607.80 L377.50 607.80 L377.50 620.28 L379.99 620.28 L379.99 601.98 L384.15 601.98 L384.15 611.96 L387.48 611.96 L387.48 619.45 L389.98 619.45 L389.98 608.64 L393.30 608.64 L393.30 599.49 L400.79 599.49 L400.79 601.98 L405.78 601.98 L405.78 608.64 L409.11 608.64 L409.11 620.28 L411.60 620.28 L411.60 603.65 L417.43 603.65 L417.43 604.48 L424.08 604.48 L424.08 602.81 L430.73 602.81 L430.73 601.98 L434.06 601.98 L434.06 601.15 L442.38 601.15 L442.38 605.31 L448.20 605.31 L448.20 611.96 L450.70 611.96 L450.70 623.61 L453.19 623.61 L453.19 610.30 L455.69 610.30 L455.69 599.49 L459.85 599.49 L459.85 603.65 L462.34 603.65 L462.34 610.30 L464.01 610.30 L464.00 616.12 L466.00 616.12 L466.00 605.31 L469.82 605.31 L469.82 606.97 L473.15 606.97 L473.15 603.65 L475.65 603.65 L475.65 601.15 L486.46 601.15 L486.46 610.30 L489.79 610.30 L489.79 619.45 L495.61 619.45 L495.61 601.98 L497.27 601.98 L497.27 602.81 L499.77 602.81 L499.77 599.49 L503.09 599.49 L503.09 603.65 L505.59 603.65 L505.59 602.81 L510.58 602.81 L510.58 610.30 L513.08 610.30 L513.08 620.28 L514.74 620.28 L514.74 612.80 L518.07 612.80 L518.07 602.81 L520.56 602.81 L520.56 610.30 L523.06 610.30 L523.06 619.45 L525.55 619.45 L525.55 615.29 L528.05 615.29 L528.05 601.15 L535.54 601.15 L535.54 599.49 L543.85 599.49 L543.85 601.15 L550.51 601.15 L550.51 602.81 L557.16 602.81 L557.16 601.15 L563.82 601.15 L563.82 601.98 L568.81 601.98 L568.81 606.97 L573.80 606.97 L573.80 604.48 L577.13 604.48 L577.13 601.15 L583.78 601.15 L583.78 600.32 L590.43 600.32 L590.43 599.49 L602.08 599.49 L602.08 601.98 L607.07 601.98 L607.07 612.80 L609.57 612.80 L609.57 621.95 L611.23 621.95 L611.23 604.48 L617.05 604.48 L617.05 601.98 L620.38 601.98 L620.38 599.49 L627.03 599.49 L627.03 604.48 L630.36 604.48 L630.36 602.81 L637.85 602.81 L637.85 608.64 L640.34 608.64 L640.34 600.32 L642.01 600.32 L642.00 601.98 L645.33 601.98 L645.33 601.15 L651.15 601.15 L651.15 608.64 L653.65 608.64 L653.65 617.79 L656.14 617.79 L656.14 616.12 L658.64 616.12 L658.64 607.80 L661.13 607.80 L661.13 613.63 L663.63 613.63 L663.63 603.65 L668.62 603.65 L668.62 599.49 L678.60 599.49 L678.60 607.80 L681.09 607.80 L681.09 601.15 L685.25 601.15 L685.25 613.63 L687.75 613.63 L687.75 620.28 L690.24 620.28 L690.24 603.65 L692.74 603.65 L692.74 599.49 L697.73 599.49 L697.73 603.65 L702.72 603.65 L702.72 613.63 L705.22 613.63 L705.22 605.31 L710.21 605.31 L710.21 615.29 L711.87 615.29 L711.87 619.45 L714.37 619.45 L714.37 600.32 L723.52 600.32 L723.52 601.15 L728.51 601.15 L728.51 606.97 L731.84 606.97 L731.84 620.28 L734.33 620.28 L734.33 605.31 L737.66 605.31 L737.66 602.81 L741.82 602.81 L741.82 599.49 L747.64 599.49 L747.64 606.14 L750.97 606.14 L750.97 609.47 L754.29 609.47 L754.29 606.14 L756.79 606.14 L756.79 620.28 L759.28 620.28 L759.28 608.64 L761.78 608.64 L761.78 601.15 L766.77 601.15 L766.77 605.31 L769.27 605.31 L769.27 601.15 L773.43 601.15 L773.43 599.49 L785.07 599.49 L785.07 601.15 L788.40 601.15 L788.40 599.49 L792.56 599.49 L792.56 605.31 L795.88 605.31 L795.88 599.49 L810.03 599.49 L810.03 609.47 L816.68 609.47 L816.68 601.15 L820.01 601.15 L820.00 601.25 L822.52 601.25 L822.52 603.78 L826.73 603.78 L826.73 606.30 L830.94 606.30 L830.94 614.71 L833.46 614.71 L833.46 620.60 L835.98 620.60 L835.98 601.25 L842.71 601.25 L842.71 599.57 L847.76 599.57 L847.76 608.82 L851.12 608.82 L851.12 604.62 L855.33 604.62 L855.33 613.87 L857.85 613.87 L857.85 619.76 L860.38 619.76 L860.38 602.94 L862.90 602.94 L862.90 608.82 L866.27 608.82 L866.27 614.71 L867.95 614.71 L867.95 622.28 L870.47 622.28 L870.47 601.25 L872.99 601.25 L872.99 606.30 L875.52 606.30 L875.52 613.03 L878.04 613.03 L878.04 620.60 L880.57 620.60 L880.57 604.62 L883.09 604.62 L883.09 599.57 L885.61 599.57 L885.61 603.78 L888.98 603.78 L888.98 612.19 L891.50 612.19 L891.50 619.76 L893.18 619.76 L893.18 602.09 L895.71 602.09 L895.71 598.73 L899.91 598.73 L899.91 605.46 L903.28 605.46 L903.28 613.03 L904.96 613.03 L904.96 620.60 L907.48 620.60 L907.48 600.41 L910.85 600.41 L910.85 602.09 L914.21 602.09 L914.21 601.25 L920.94 601.25 L920.94 599.57 L926.83 599.57 L926.83 600.41 L937.77 600.41 L937.77 599.57 L945.34 599.57 L945.34 602.09 L949.54 602.09 L949.54 607.98 L952.91 607.98 L952.91 609.66 L955.43 609.66 L955.43 599.57 L959.64 599.57 L959.64 602.09 L963.00 602.09 L963.00 620.60 L966.37 620.60 L966.37 605.46 L968.89 605.46 L968.89 599.57 L975.62 599.57 L975.62 601.25 L982.35 601.25 L982.35 610.51 L984.87 610.51 L984.87 618.08 L987.40 618.08 L987.40 604.62 L989.92 604.62 L989.92 607.14 L992.44 607.14 L992.44 601.25 L994.97 601.25 L994.97 602.09 L998.00 602.09 L998 632.45 Z" fill="#3b7af7"/><path d="M288.00 646.50H418.80V670.95H288.00ZM421.10 646.50H448.20V670.95H421.10ZM452.90 646.50H455.40V670.95H452.90ZM460.70 646.50H466.00V670.95H460.70ZM470.30 646.50H475.60V670.95H470.30ZM483.10 646.50H490.30V670.95H483.10ZM495.60 646.50H500.60V670.95H495.60ZM502.80 646.50H504.90V670.95H502.80ZM527.70 646.50H530.20V670.95H527.70ZM535.00 646.50H538.00V670.95H535.00ZM545.00 646.50H551.80V670.95H545.00ZM556.30 646.50H559.20V670.95H556.30ZM561.80 646.50H564.60V670.95H561.80ZM566.60 646.50H572.10V670.95H566.60ZM576.60 646.50H606.70V670.95H576.60ZM613.70 646.50H720.20V670.95H613.70ZM722.20 646.50H739.30V670.95H722.20ZM744.80 646.50H998.00V670.95H744.80Z" fill="#62cb92"/><rect x="692.70" y="634.90" width="2.90" height="36.05" fill="#62cb92"/><rect x="692.70" y="659.35" width="2.90" height="11.6" fill="#2fa35c"/><rect x="801.20" y="634.90" width="2.50" height="36.05" fill="#62cb92"/><rect x="801.20" y="659.35" width="2.50" height="11.6" fill="#2fa35c"/><rect x="810.90" y="634.90" width="2.80" height="36.05" fill="#62cb92"/><rect x="810.90" y="659.35" width="2.80" height="11.6" fill="#2fa35c"/><rect x="911.70" y="634.90" width="2.90" height="36.05" fill="#62cb92"/><rect x="911.70" y="659.35" width="2.90" height="11.6" fill="#2fa35c"/><rect x="973.90" y="634.90" width="2.60" height="36.05" fill="#62cb92"/><rect x="973.90" y="659.35" width="2.60" height="11.6" fill="#2fa35c"/><rect x="981.20" y="634.90" width="2.30" height="36.05" fill="#62cb92"/><rect x="981.20" y="659.35" width="2.30" height="11.6" fill="#2fa35c"/><rect x="986.60" y="634.90" width="2.50" height="36.05" fill="#62cb92"/><rect x="986.60" y="659.35" width="2.50" height="11.6" fill="#2fa35c"/><rect x="537.70" y="634.90" width="1.50" height="36.05" fill="#2fa35c"/><rect x="816.70" y="634.90" width="1.60" height="36.05" fill="#2fa35c"/><rect x="288" y="705.35" width="710" height="4.00" fill="#7ba6f7"/><rect x="288" y="743.50" width="710" height="4.40" fill="#62cb92"/><rect x="287.4" y="749.40" width="710.6" height="35.75" fill="#7ba6f7"/><path d="M287.4 785.15 L287.4 769.12 L287.40 769.12 L290.99 769.12 L290.99 769.95 L295.98 769.95 L295.98 771.29 L302.64 771.29 L302.64 769.95 L309.29 769.95 L309.29 770.79 L315.95 770.79 L315.95 769.12 L320.94 769.12 L320.94 771.62 L330.92 771.62 L330.92 769.95 L335.91 769.95 L335.91 766.63 L340.90 766.63 L340.90 769.95 L349.22 769.95 L349.22 771.62 L360.86 771.62 L360.86 769.95 L369.18 769.95 L369.18 765.80 L372.51 765.80 L372.51 771.29 L379.16 771.29 L379.16 766.63 L384.15 766.63 L384.15 771.62 L392.47 771.62 L392.47 769.95 L402.45 769.95 L402.45 771.62 L410.77 771.62 L410.77 769.95 L422.42 769.95 L422.42 770.79 L435.73 770.79 L435.73 771.62 L452.36 771.62 L452.36 764.96 L455.69 764.96 L455.69 770.79 L461.51 770.79 L461.51 766.29 L464.01 766.29 L464.00 763.30 L465.66 763.30 L465.66 770.79 L469.82 770.79 L469.82 769.95 L473.15 769.95 L473.15 771.62 L475.65 771.62 L475.65 772.45 L487.29 772.45 L487.29 766.29 L490.62 766.29 L490.62 759.97 L495.61 759.97 L495.61 772.45 L497.27 772.45 L497.27 771.29 L502.26 771.29 L502.26 770.79 L504.76 770.79 L504.76 771.95 L509.75 771.95 L509.75 764.96 L513.08 764.96 L513.08 757.98 L514.74 757.98 L514.74 765.80 L518.07 765.80 L518.07 772.45 L520.56 772.45 L520.56 765.80 L522.23 765.80 L522.23 759.97 L524.72 759.97 L524.72 763.30 L527.22 763.30 L527.22 772.45 L538.86 772.45 L538.86 771.29 L542.19 771.29 L542.19 772.45 L547.18 772.45 L547.18 771.29 L549.68 771.29 L549.68 772.45 L552.17 772.45 L552.17 771.29 L557.16 771.29 L557.16 771.95 L563.82 771.95 L563.82 771.62 L569.64 771.62 L569.64 768.29 L572.14 768.29 L572.14 769.95 L576.29 769.95 L576.29 772.45 L583.78 772.45 L583.78 771.62 L587.11 771.62 L587.11 772.45 L603.74 772.45 L603.74 770.79 L607.07 770.79 L607.07 764.13 L608.73 764.13 L608.73 759.14 L611.23 759.14 L611.23 770.79 L614.56 770.79 L614.56 771.29 L618.72 771.29 L618.72 772.45 L628.70 772.45 L628.70 769.95 L630.36 769.95 L630.36 770.79 L637.85 770.79 L637.85 766.63 L640.34 766.63 L640.34 772.45 L642.01 772.45 L642.00 771.62 L651.15 771.62 L651.15 765.80 L653.65 765.80 L653.65 759.97 L657.80 759.97 L657.80 766.63 L661.13 766.63 L661.13 761.64 L662.80 761.64 L662.80 769.95 L668.62 769.95 L668.62 771.29 L675.27 771.29 L675.27 769.12 L677.77 769.12 L677.77 766.29 L680.26 766.29 L680.26 768.29 L685.25 768.29 L685.25 761.64 L687.75 761.64 L687.75 758.31 L690.24 758.31 L690.24 771.29 L698.56 771.29 L698.56 770.29 L702.72 770.29 L702.72 763.30 L705.22 763.30 L705.22 769.95 L707.71 769.95 L707.71 765.80 L710.21 765.80 L710.21 759.14 L715.20 759.14 L715.20 771.29 L717.69 771.29 L717.69 770.79 L720.19 770.79 L720.19 771.29 L728.51 771.29 L728.51 765.80 L731.00 765.80 L731.00 758.31 L735.16 758.31 L735.16 766.63 L737.66 766.63 L737.66 769.95 L741.82 769.95 L741.82 771.29 L745.98 771.29 L745.98 771.62 L748.47 771.62 L748.47 766.63 L751.80 766.63 L751.80 769.95 L755.96 769.95 L755.96 763.30 L758.45 763.30 L758.45 756.31 L761.78 756.31 L761.78 764.96 L763.44 764.96 L763.44 771.29 L766.77 771.29 L766.77 766.63 L769.27 766.63 L769.27 771.29 L780.08 771.29 L780.08 769.95 L782.58 769.95 L782.58 771.29 L786.73 771.29 L786.73 768.29 L789.23 768.29 L789.23 771.29 L793.39 771.29 L793.39 767.46 L796.72 767.46 L796.72 771.29 L810.86 771.29 L810.86 764.96 L816.68 764.96 L816.68 768.29 L820.01 768.29 L820.00 768.55 L821.68 768.55 L821.68 771.58 L825.89 771.58 L825.89 766.87 L829.25 766.87 L829.25 766.03 L830.94 766.03 L830.94 760.98 L833.46 760.98 L833.46 758.12 L835.98 758.12 L835.98 770.57 L841.87 770.57 L841.87 771.08 L848.60 771.08 L848.60 766.03 L851.12 766.03 L851.12 767.71 L855.33 767.71 L855.33 761.82 L857.85 761.82 L857.85 758.12 L860.38 758.12 L860.38 770.24 L862.90 770.24 L862.90 766.03 L865.42 766.03 L865.42 760.98 L867.95 760.98 L867.95 758.12 L870.47 758.12 L870.47 770.24 L872.99 770.24 L872.99 767.71 L875.52 767.71 L875.52 761.82 L878.04 761.82 L878.04 758.12 L879.72 758.12 L879.72 771.08 L884.77 771.08 L884.77 770.24 L887.29 770.24 L887.29 764.35 L889.82 764.35 L889.82 758.12 L892.34 758.12 L892.34 766.03 L894.02 766.03 L894.02 770.24 L899.07 770.24 L899.07 767.71 L901.59 767.71 L901.59 761.82 L904.12 761.82 L904.12 756.44 L907.48 756.44 L907.48 771.08 L910.01 771.08 L910.01 768.55 L911.69 768.55 L911.69 770.24 L914.21 770.24 L914.21 771.58 L924.31 771.58 L924.31 770.57 L927.67 770.57 L927.67 771.08 L947.86 771.08 L947.86 770.24 L949.54 770.24 L949.54 765.52 L954.59 765.52 L954.59 770.57 L957.95 770.57 L957.95 771.08 L961.32 771.08 L961.32 761.82 L963.84 761.82 L963.84 756.44 L966.37 756.44 L966.37 770.24 L969.73 770.24 L969.73 771.58 L972.25 771.58 L972.25 770.24 L980.67 770.24 L980.67 765.19 L983.19 765.19 L983.19 758.12 L985.71 758.12 L985.71 764.35 L988.24 764.35 L988.24 770.24 L990.76 770.24 L990.76 766.87 L993.28 766.87 L993.28 770.24 L995.81 770.24 L995.81 770.57 L998.00 770.57 L998 785.15 Z" fill="#3b7af7"/><rect x="288" y="819.25" width="710" height="4.30" fill="#62cb92"/><rect x="330.20" y="857.95" width="1.70" height="3.8" fill="#7ba6f7"/><rect x="334.90" y="857.95" width="5.00" height="3.8" fill="#7ba6f7"/><rect x="369.80" y="857.95" width="2.00" height="3.8" fill="#7ba6f7"/><rect x="507.90" y="857.95" width="2.00" height="3.8" fill="#7ba6f7"/><rect x="582.00" y="857.95" width="2.00" height="3.8" fill="#7ba6f7"/><rect x="690.50" y="857.95" width="5.00" height="3.8" fill="#7ba6f7"/><rect x="704.60" y="857.95" width="2.60" height="3.8" fill="#7ba6f7"/><rect x="709.90" y="857.95" width="2.40" height="3.8" fill="#7ba6f7"/><rect x="714.60" y="857.95" width="2.70" height="3.8" fill="#7ba6f7"/><rect x="766.50" y="857.95" width="2.60" height="3.8" fill="#7ba6f7"/><rect x="811.00" y="857.95" width="2.60" height="3.8" fill="#7ba6f7"/><rect x="858.50" y="857.95" width="1.60" height="3.8" fill="#7ba6f7"/><rect x="956.50" y="857.95" width="2.70" height="3.8" fill="#7ba6f7"/><rect x="983.30" y="857.95" width="2.70" height="3.8" fill="#7ba6f7"/><rect x="963.80" y="896.25" width="2.70" height="3.5" fill="#62cb92"/></svg>
<div class="t" style="left:293.30px;top:566.12px;font-size:11.2px;color:#fff;-webkit-text-stroke:0.3px #fff;letter-spacing:0.4px;">Downstream Jitter</div>
<div class="t" style="left:293.30px;top:604.22px;font-size:11.2px;color:#fff;-webkit-text-stroke:0.3px #fff;letter-spacing:0.4px;">Upstream Latency: 42 ms</div>
<div class="t" style="left:293.30px;top:642.32px;font-size:11.2px;color:#fff;-webkit-text-stroke:0.3px #fff;letter-spacing:0.4px;">Upstream Jitter: 1.5 ms</div>
<div class="t" style="left:293.30px;top:680.42px;font-size:11.2px;color:#fff;-webkit-text-stroke:0.3px #fff;letter-spacing:0.4px;">Total Bytes: 38.8 MB</div>
<div class="t" style="left:293.30px;top:718.52px;font-size:11.2px;color:#fff;-webkit-text-stroke:0.3px #fff;letter-spacing:0.4px;">Total Packets: 478 K</div>
<div class="t" style="left:293.30px;top:756.62px;font-size:11.2px;color:#fff;-webkit-text-stroke:0.3px #fff;letter-spacing:0.4px;">Downstream Latency: 49.1 ms</div>
<div class="t" style="left:293.30px;top:794.72px;font-size:11.2px;color:#fff;-webkit-text-stroke:0.3px #fff;letter-spacing:0.4px;">Average Throughput: 3.9 kbps</div>
<div class="t" style="left:293.30px;top:832.82px;font-size:11.2px;color:#fff;-webkit-text-stroke:0.3px #fff;letter-spacing:0.4px;">Upstream Packet Loss: 0%</div>
<div class="t" style="left:293.30px;top:870.92px;font-size:11.2px;color:#fff;-webkit-text-stroke:0.3px #fff;letter-spacing:0.4px;">Downstream Packet Loss: 0%</div>
<div class="t" style="left:297.00px;top:904.42px;font-size:11.2px;color:#fff;-webkit-text-stroke:0.3px #fff;letter-spacing:0.15px;">Apr 13, 00:45</div>
<div class="t" style="left:287.30px;top:924.82px;font-size:12.5px;color:#d3d7d9;-webkit-text-stroke:0.3px #d3d7d9;">Source Edge</div>
<div class="t" style="left:287.30px;top:943.08px;font-size:12.9px;color:#49afd9;-webkit-text-stroke:0.3px #49afd9;">Detroit, Branch</div>
<div class="t" style="left:431.50px;top:924.82px;font-size:12.5px;color:#d3d7d9;-webkit-text-stroke:0.3px #d3d7d9;">Source Link</div>
<div class="t" style="left:431.50px;top:943.08px;font-size:12.9px;color:#49afd9;-webkit-text-stroke:0.3px #49afd9;">[Spectrum]-[GE3]</div>
<div class="t" style="left:575.70px;top:924.82px;font-size:12.5px;color:#d3d7d9;-webkit-text-stroke:0.3px #d3d7d9;">Destination</div>
<div class="t" style="left:575.70px;top:943.08px;font-size:12.9px;color:#49afd9;-webkit-text-stroke:0.3px #49afd9;">VCG01</div>
<div class="t" style="left:719.70px;top:924.82px;font-size:12.5px;color:#d3d7d9;-webkit-text-stroke:0.3px #d3d7d9;">Destination Type</div>
<div class="t" style="left:719.70px;top:943.84px;font-size:12px;color:#fff;-webkit-text-stroke:0.45px #fff;letter-spacing:0.17px;">Gateway</div>
<div class="r" style="left:421.1px;top:922.5px;width:1px;height:36px;background:repeating-linear-gradient(to bottom,#7a8890 0 1px,transparent 1px 2px);opacity:0.5;"></div>
<div class="r" style="left:565.5px;top:922.5px;width:1px;height:36px;background:repeating-linear-gradient(to bottom,#7a8890 0 1px,transparent 1px 2px);opacity:0.5;"></div>
<div class="r" style="left:709.5px;top:922.5px;width:1px;height:36px;background:repeating-linear-gradient(to bottom,#7a8890 0 1px,transparent 1px 2px);opacity:0.5;"></div>
<div class="r" style="left:279.00px;top:966.70px;width:752.00px;height:1.30px;background:#55656f;"></div>

</div></body></html>
